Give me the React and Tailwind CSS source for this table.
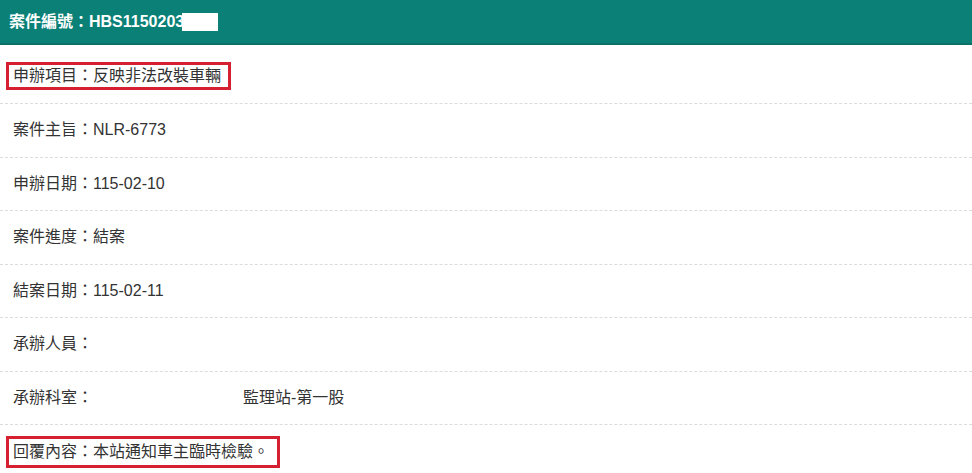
import React from "react";

const font = { fontFamily: '"Liberation Sans", "Noto Sans CJK TC", Arial, sans-serif' };

function Row({ children, first, last, boxed }) {
  return (
    <div
      className={`flex items-center ${boxed ? "pl-[6px]" : "pl-[13px]"} ${
        last ? "" : "border-b border-dashed border-[#dcdcdc]"
      } ${first ? "h-[59px] pt-[4px]" : "h-[53.5px]"} text-[16px] text-[#333333]`}
    >
      {children}
    </div>
  );
}

export default function App() {
  return (
    <div className="w-[972px] h-[473px] bg-white overflow-hidden" style={font}>
      <div className="h-[45px] bg-[#0a8076] border-b-[2px] border-[#0b7068] flex items-center pl-[9px] pt-[1px]">
        <span className="text-white font-bold text-[16px] leading-none">案件編號：HBS1150203</span>
        <span className="inline-block w-[36px] h-[18px] bg-white -ml-[2px]" />
      </div>
      <Row first boxed>
        <span className="inline-block border-[3px] border-[#d42030] pl-[4px] pr-[7px] py-[2px] leading-[18px]">
          申辦項目：反映非法改裝車輛
        </span>
      </Row>
      <Row>案件主旨：NLR-6773</Row>
      <Row>申辦日期：115-02-10</Row>
      <Row>案件進度：結案</Row>
      <Row>結案日期：115-02-11</Row>
      <Row>承辦人員：</Row>
      <Row>
        <span className="w-[230px]">承辦科室：</span>
        <span>監理站-第一股</span>
      </Row>
      <Row last boxed>
        <span className="inline-block border-[3px] border-[#d42030] pl-[4px] pr-[8px] py-[4px] leading-[18px]">
          回覆內容：本站通知車主臨時檢驗。
        </span>
      </Row>
    </div>
  );
}
